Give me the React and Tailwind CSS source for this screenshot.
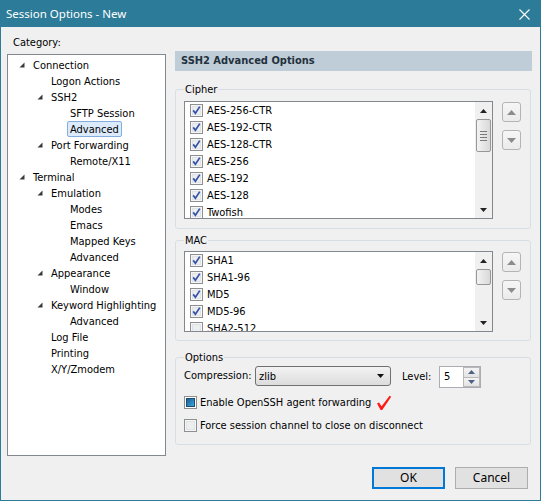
import React from "react";

const TAHOMA = "font-['DejaVu_Sans_Condensed','Liberation_Sans',sans-serif]";
const SEGOE = "font-['Noto_Sans','Liberation_Sans',sans-serif]";

const tree = [
  [0, "Connection", true],
  [1, "Logon Actions"],
  [1, "SSH2", true],
  [2, "SFTP Session"],
  [2, "Advanced", false, true],
  [1, "Port Forwarding", true],
  [2, "Remote/X11"],
  [0, "Terminal", true],
  [1, "Emulation", true],
  [2, "Modes"],
  [2, "Emacs"],
  [2, "Mapped Keys"],
  [2, "Advanced"],
  [1, "Appearance", true],
  [2, "Window"],
  [1, "Keyword Highlighting", true],
  [2, "Advanced"],
  [1, "Log File"],
  [1, "Printing"],
  [1, "X/Y/Zmodem"],
];
const levelPad = ["pl-[11px]", "pl-[29px]", "pl-[48px]"];

function Expander() {
  return (
    <svg width="6" height="6" viewBox="0 0 6 6" className="block">
      <polygon points="5.5,0.5 5.5,5.5 0.5,5.5" fill="#3a3a3a" />
    </svg>
  );
}

function Check({ checked = true }) {
  return (
    <svg width="13" height="13" viewBox="0 0 13 13" className="block shrink-0">
      <rect x="0.5" y="0.5" width="12" height="12" fill="#f6f6f6" stroke="#8e8f8f" />
      <rect x="2" y="2" width="9" height="9" fill="#dfe2e6" />
      <rect x="3" y="3" width="7" height="7" fill="#eceef0" />
      {checked && (
        <path d="M3.2 6.4 L5.4 9.2 L9.8 2.6" stroke="#3452a8" strokeWidth="1.7" fill="none" />
      )}
    </svg>
  );
}

function TinyTri({ up, color = "#222", w = 7, h = 4 }) {
  return (
    <svg width={w} height={h} viewBox={`0 0 ${w} ${h}`} className="block">
      {up ? (
        <polygon points={`0,${h} ${w / 2},0 ${w},${h}`} fill={color} />
      ) : (
        <polygon points={`0,0 ${w / 2},${h} ${w},0`} fill={color} />
      )}
    </svg>
  );
}

function Scrollbar({ thumb }) {
  return (
    <div className="flex w-[17px] shrink-0 flex-col bg-[#f0f0f0]">
      <div className="flex h-[17px] items-center justify-center">
        <TinyTri up />
      </div>
      {thumb === "big" ? (
        <div className="mx-[1px] flex h-[33px] flex-col items-center justify-center gap-[2px] rounded-[2px] border border-[#979797] bg-linear-to-r from-[#f3f3f3] to-[#d9d9d9]">
          <div className="h-px w-[7px] bg-[#7a7a7a]" />
          <div className="h-px w-[7px] bg-[#7a7a7a]" />
          <div className="h-px w-[7px] bg-[#7a7a7a]" />
          <div className="h-px w-[7px] bg-[#7a7a7a]" />
        </div>
      ) : (
        <div className="mx-[1px] h-[16px] rounded-[2px] border border-[#979797] bg-linear-to-r from-[#f3f3f3] to-[#d9d9d9]" />
      )}
      <div className="flex-1" />
      <div className="flex h-[17px] items-center justify-center">
        <TinyTri />
      </div>
    </div>
  );
}

function MoveBtn({ up }) {
  return (
    <div className="flex h-[20px] w-[19px] items-center justify-center rounded-[3px] border border-[#b4b4b4] bg-linear-to-b from-[#f6f6f6] to-[#ebebeb]">
      <TinyTri up={up} color="#8c8c8c" w={9} h={5} />
    </div>
  );
}

function ListBox({ items, heightClass, thumb }) {
  return (
    <div className="flex">
      <div className={`flex w-[309px] shrink-0 border border-[#828790] bg-white ${heightClass}`}>
        <div className="flex-1 overflow-hidden">
          {items.map(([label, on]) => (
            <div key={label} className="flex h-[17px] items-center pl-[5px]">
              <Check checked={on} />
              <span className="ml-[4px] leading-[13px]">{label}</span>
            </div>
          ))}
        </div>
        <Scrollbar thumb={thumb} />
      </div>
      <div className="ml-[9px] mt-[1px] flex flex-col gap-[8px]">
        <MoveBtn up />
        <MoveBtn />
      </div>
    </div>
  );
}

function GroupLabel({ children }) {
  return (
    <div className="-mt-[7px] w-fit bg-[#f0f0f0] px-[1px] leading-[13px]">{children}</div>
  );
}

export default function App() {
  return (
    <div className={`flex h-[501px] w-[541px] flex-col border border-[#2c7b98] bg-[#f0f0f0] text-[11px] text-black ${TAHOMA}`}>
      {/* Title bar */}
      <div className="flex h-[26px] shrink-0 items-center justify-between bg-[#2c7b98] pl-[5px] pr-[10px]">
        <span className={`text-[11.5px] text-white ${SEGOE}`}>Session Options - New</span>
        <svg width="11" height="11" viewBox="0 0 11 11" className="block">
          <path d="M0.5 0.5 L10.5 10.5 M10.5 0.5 L0.5 10.5" stroke="#ffffff" strokeWidth="1.1" />
        </svg>
      </div>

      {/* Body */}
      <div className="flex flex-1 flex-col pl-[6px] pr-[7px]">
        <div className="flex">
          {/* Left column */}
          <div className="flex w-[159px] shrink-0 flex-col pt-[9px]">
            <div className="h-[13px] pl-[6px] leading-[13px]">Category:</div>
            <div className="mt-[5px] h-[402px] border border-[#828790] bg-white pt-[2px]">
              {tree.map(([lvl, label, exp, sel], i) => (
                <div key={i} className={`flex h-[16px] items-center ${levelPad[lvl]}`}>
                  <div className="flex w-[14px] items-center">{exp && <Expander />}</div>
                  {sel ? (
                    <span className="-ml-[3px] flex h-[16px] items-center rounded-[2px] border border-[#84acdd] bg-[#dcebfc] px-[2px] leading-[13px]">
                      {label}
                    </span>
                  ) : (
                    <span className="leading-[13px]">{label}</span>
                  )}
                </div>
              ))}
            </div>
          </div>

          {/* Right column */}
          <div className="ml-[9px] flex w-[357px] shrink-0 flex-col pt-[24px]">
            <div className="flex h-[20px] items-center bg-[#bfcdd9] pl-[6px] font-bold text-[#24313d]">
              SSH2 Advanced Options
            </div>

            {/* Cipher */}
            <div className="mt-[18px] w-[356px] rounded-[3px] border border-[#d5dfe5] px-[8px] pb-[9px]">
              <GroupLabel>Cipher</GroupLabel>
              <div className="mt-[5px]">
                <ListBox
                  heightClass="h-[118px]"
                  thumb="big"
                  items={[
                    ["AES-256-CTR", true],
                    ["AES-192-CTR", true],
                    ["AES-128-CTR", true],
                    ["AES-256", true],
                    ["AES-192", true],
                    ["AES-128", true],
                    ["Twofish", true],
                  ]}
                />
              </div>
            </div>

            {/* MAC */}
            <div className="mt-[11px] w-[356px] rounded-[3px] border border-[#d5dfe5] px-[8px] pb-[8px]">
              <GroupLabel>MAC</GroupLabel>
              <div className="mt-[4px]">
                <ListBox
                  heightClass="h-[81px]"
                  thumb="small"
                  items={[
                    ["SHA1", true],
                    ["SHA1-96", true],
                    ["MD5", true],
                    ["MD5-96", true],
                    ["SHA2-512", false],
                  ]}
                />
              </div>
            </div>

            {/* Options */}
            <div className="mt-[16px] w-[356px] rounded-[3px] border border-[#d5dfe5] px-[8px] pb-[12px]">
              <GroupLabel>Options</GroupLabel>
              <div className="mt-[2px] flex h-[22px] items-start">
                <div className="flex h-[20px] w-[71px] shrink-0 items-center">Compression:</div>
                <div className="flex h-[20px] w-[136px] shrink-0 items-center justify-between rounded-[3px] border border-[#707070] bg-linear-to-b from-[#f2f2f2] to-[#dcdcdc] pl-[3px] pr-[6px]">
                  <span className="leading-[13px]">zlib</span>
                  <TinyTri color="#111" w={7} h={4} />
                </div>
                <div className="ml-[11px] flex h-[22px] w-[37px] shrink-0 items-center">Level:</div>
                <div className="flex h-[22px] w-[42px] shrink-0 border border-[#abadb3] bg-white">
                  <div className="flex flex-1 items-center pl-[4px]">5</div>
                  <div className="flex w-[17px] flex-col">
                    <div className="flex flex-1 items-center justify-center border border-[#b9b9b9] bg-linear-to-b from-[#f4f4f4] to-[#e3e3e3]">
                      <TinyTri up color="#4d6185" w={7} h={4} />
                    </div>
                    <div className="flex flex-1 items-center justify-center border border-t-0 border-[#b9b9b9] bg-linear-to-b from-[#f4f4f4] to-[#e3e3e3]">
                      <TinyTri color="#4d6185" w={7} h={4} />
                    </div>
                  </div>
                </div>
              </div>

              <div className="mt-[8px] flex h-[13px] items-center">
                <div className="flex h-[13px] w-[13px] shrink-0 items-center justify-center border border-[#8e8f8f] bg-white">
                  <div className="h-[9px] w-[9px] border border-[#1b4d73] bg-linear-to-br from-[#1a5e90] to-[#3fa7df]" />
                </div>
                <span className="ml-[3px] leading-[13px]">Enable OpenSSH agent forwarding</span>
                <svg width="16" height="16" viewBox="0 0 16 16" className="ml-[5px] block">
                  <path d="M1 8.5 L3 7.5 L5.6 11.2 L13.6 0.8 L15.2 1.8 L6.2 15 L4.6 15 Z" fill="#ff1a1a" />
                </svg>
              </div>

              <div className="mt-[10px] flex h-[13px] items-center">
                <Check checked={false} />
                <span className="ml-[3px] leading-[13px]">Force session channel to close on disconnect</span>
              </div>
            </div>
          </div>
        </div>

        {/* Buttons */}
        <div className={`mt-[11px] flex justify-end gap-[10px] pr-[5px] text-[12px] ${SEGOE}`}>
          <div className="flex h-[22px] w-[73px] items-center justify-center border-2 border-[#0078d7] bg-[#e1e1e1]">
            OK
          </div>
          <div className="flex h-[22px] w-[73px] items-center justify-center border border-[#adadad] bg-[#e1e1e1]">
            Cancel
          </div>
        </div>
      </div>
    </div>
  );
}
